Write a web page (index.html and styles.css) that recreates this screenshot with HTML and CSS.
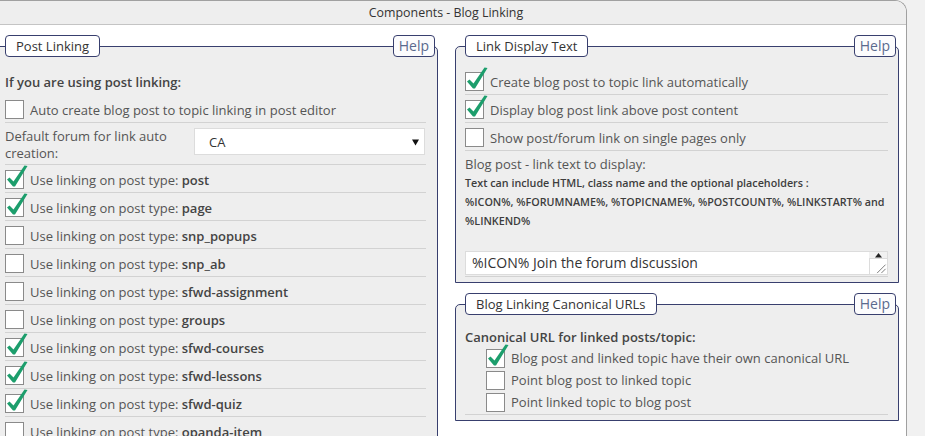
FILE: index.html
```html
<!DOCTYPE html>
<html lang="en">
<head>
<meta charset="utf-8">
<title>Components - Blog Linking</title>
<link rel="stylesheet" href="styles.css">
</head>
<body>
<div class="panel">
  <div class="panel-title">Components - Blog Linking</div>
  <div class="panel-body">
    <section class="fs">
      <div class="fs-head"><span class="legend">Post Linking</span><span class="help">Help</span></div>
      <div class="rows rows-left">
        <div class="row intro">If you are using post linking:</div>
        <div class="row"><span class="cb"></span>Auto create blog post to topic linking in post editor</div>
        <div class="row row-select">
          <span class="sel-label">Default forum for link auto creation:</span>
          <div class="select"><span>CA</span><svg class="sel-arrow" viewBox="0 0 7 7"><polygon points="0,0.5 7,0.5 3.5,6.5"/></svg></div>
        </div>
        <div class="row"><span class="cb"><svg class="tick" viewBox="0 0 19 19"><polygon points="2,9.5 4.5,7.5 8.5,11.5 19.5,-4.5 22.5,-4 10,16.5 8,16.5"/></svg></span>Use linking on post type:&nbsp;<b>post</b></div>
        <div class="row"><span class="cb"><svg class="tick" viewBox="0 0 19 19"><polygon points="2,9.5 4.5,7.5 8.5,11.5 19.5,-4.5 22.5,-4 10,16.5 8,16.5"/></svg></span>Use linking on post type:&nbsp;<b>page</b></div>
        <div class="row"><span class="cb"></span>Use linking on post type:&nbsp;<b>snp_popups</b></div>
        <div class="row"><span class="cb"></span>Use linking on post type:&nbsp;<b>snp_ab</b></div>
        <div class="row"><span class="cb"></span>Use linking on post type:&nbsp;<b>sfwd-assignment</b></div>
        <div class="row"><span class="cb"></span>Use linking on post type:&nbsp;<b>groups</b></div>
        <div class="row"><span class="cb"><svg class="tick" viewBox="0 0 19 19"><polygon points="2,9.5 4.5,7.5 8.5,11.5 19.5,-4.5 22.5,-4 10,16.5 8,16.5"/></svg></span>Use linking on post type:&nbsp;<b>sfwd-courses</b></div>
        <div class="row"><span class="cb"><svg class="tick" viewBox="0 0 19 19"><polygon points="2,9.5 4.5,7.5 8.5,11.5 19.5,-4.5 22.5,-4 10,16.5 8,16.5"/></svg></span>Use linking on post type:&nbsp;<b>sfwd-lessons</b></div>
        <div class="row"><span class="cb"><svg class="tick" viewBox="0 0 19 19"><polygon points="2,9.5 4.5,7.5 8.5,11.5 19.5,-4.5 22.5,-4 10,16.5 8,16.5"/></svg></span>Use linking on post type:&nbsp;<b>sfwd-quiz</b></div>
        <div class="row"><span class="cb"></span>Use linking on post type:&nbsp;<b>opanda-item</b></div>
      </div>
    </section>

    <div class="col-right">
      <section class="fs">
        <div class="fs-head"><span class="legend">Link Display Text</span><span class="help">Help</span></div>
        <div class="rows rows-right">
          <div class="row"><span class="cb"><svg class="tick" viewBox="0 0 19 19"><polygon points="2,9.5 4.5,7.5 8.5,11.5 19.5,-4.5 22.5,-4 10,16.5 8,16.5"/></svg></span>Create blog post to topic link automatically</div>
          <div class="row"><span class="cb"><svg class="tick" viewBox="0 0 19 19"><polygon points="2,9.5 4.5,7.5 8.5,11.5 19.5,-4.5 22.5,-4 10,16.5 8,16.5"/></svg></span>Display blog post link above post content</div>
          <div class="row"><span class="cb"></span>Show post/forum link on single pages only</div>
          <div class="ta-block">
            <div class="ta-label">Blog post - link text to display:</div>
            <div class="note">Text can include HTML, class name and the optional placeholders :<br>%ICON%, %FORUMNAME%, %TOPICNAME%, %POSTCOUNT%, %LINKSTART% and %LINKEND%</div>
            <div class="ta">
              <textarea rows="1">%ICON% Join the forum discussion</textarea>
              <div class="ta-scroll">
                <div class="ta-arrow"><svg viewBox="0 0 7 5"><polygon points="3.5,0 7,4.5 0,4.5"/></svg></div>
                <div class="ta-grip"><svg viewBox="0 0 16 16"><line x1="6" y1="15" x2="15" y2="6"/><line x1="10.5" y1="15" x2="15" y2="10.5"/></svg></div>
              </div>
            </div>
          </div>
        </div>
      </section>

      <section class="fs">
        <div class="fs-head"><span class="legend">Blog Linking Canonical URLs</span><span class="help">Help</span></div>
        <div class="rows rows-right">
          <div class="canon-title">Canonical URL for linked posts/topic:</div>
          <div class="opts">
            <div class="opt"><span class="cb"><svg class="tick" viewBox="0 0 19 19"><polygon points="2,9.5 4.5,7.5 8.5,11.5 19.5,-4.5 22.5,-4 10,16.5 8,16.5"/></svg></span>Blog post and linked topic have their own canonical URL</div>
            <div class="opt"><span class="cb"></span>Point blog post to linked topic</div>
            <div class="opt"><span class="cb"></span>Point linked topic to blog post</div>
          </div>
        </div>
      </section>
    </div>
  </div>
</div>
</body>
</html>
```

FILE: styles.css
```css
* { box-sizing: border-box; }

html, body {
  margin: 0;
  padding: 0;
  height: 436px;
  overflow: hidden;
}

body {
  background: #f1f1f1;
  font-family: "Open Sans", "Liberation Sans", sans-serif;
  font-size: 13px;
  color: #555;
}

.panel {
  width: 922px;
  height: 480px;
  margin-left: -15px;
  background: #fff;
  border: 1px solid #a0a0a0;
  border-bottom: none;
  border-radius: 0 12px 0 0;
}

.panel-title {
  height: 24px;
  background: #eee;
  border-bottom: 1px solid #c4c4c4;
  border-radius: 0 11px 0 0;
  text-align: center;
  font-size: 12.4px;
  line-height: 23px;
  color: #333;
}

.panel-body {
  display: grid;
  grid-template-columns: 443px 444px;
  column-gap: 17px;
  align-items: start;
  padding: 21px 7px 0 9px;
}

.col-right {
  display: flex;
  flex-direction: column;
  gap: 21px;
}

.fs {
  background: #eee;
  border: 1px solid #383f6e;
  border-radius: 5px 5px 0 0;
  padding: 0 0 5px 0;
}

.fs-head {
  display: flex;
  justify-content: space-between;
  align-items: flex-start;
  margin: -12px 2px 10px 9px;
}

.legend, .help {
  background: #fff;
  border: 1px solid #383f6e;
  border-radius: 4px;
  line-height: 20px;
  height: 22px;
  white-space: nowrap;
}

.legend {
  padding: 0 10px;
  color: #333;
}

.help {
  padding: 0 5px;
  font-size: 14px;
  color: #5a6a8e;
  background: #fcfcfd;
}

.rows-left { margin: 0 11px 0 9px; }
.rows-right { margin: 0 10px 0 9px; }

.row {
  display: flex;
  align-items: center;
  height: 28px;
  padding-top: 2px;
  border-bottom: 1px solid #d2d2d2;
  white-space: nowrap;
}

.row b, .opt b {
  font-weight: 600;
  color: #444;
}

.intro {
  border-bottom-color: transparent;
  font-weight: 600;
  color: #444;
}

.row-select {
  height: 42px;
  align-items: flex-start;
  padding-top: 5px;
  white-space: normal;
}

.sel-label {
  width: 189px;
  flex: none;
  line-height: 17px;
}

.select {
  width: 231px;
  height: 27px;
  flex: none;
  background: #fff;
  border: 1px solid #dcdcdc;
  display: flex;
  align-items: center;
  justify-content: space-between;
  padding: 0 5px 0 14px;
  color: #333;
}

.sel-arrow {
  width: 7px;
  height: 7px;
  fill: #111;
  margin-top: 1px;
}

.cb {
  position: relative;
  flex: none;
  width: 19px;
  height: 19px;
  margin-right: 6px;
  background: #fff;
  border: 1px solid #8a8a8a;
}

.tick {
  position: absolute;
  left: -1px;
  top: -1px;
  width: 19px;
  height: 19px;
  overflow: visible;
  fill: #1c9e6c;
}

.ta-block {
  border-bottom: 1px solid #d2d2d2;
  padding: 4px 0 1px 0;
}

.ta-label {
  line-height: 19px;
}

.note {
  font-size: 10.75px;
  font-weight: 600;
  line-height: 19px;
  color: #3d3d3d;
}

.ta {
  display: flex;
  height: 24px;
  margin-top: 20px;
  background: #fff;
  border: 1px solid #dcdcdc;
}

.ta textarea {
  flex: 1;
  min-width: 0;
  height: 22px;
  border: none;
  outline: none;
  resize: none;
  overflow: hidden;
  background: transparent;
  font-family: "Open Sans", "Liberation Sans", sans-serif;
  font-size: 14px;
  line-height: 21px;
  color: #333;
  padding: 0 6px;
  margin: 0;
}

.ta-scroll {
  width: 18px;
  flex: none;
  display: flex;
  flex-direction: column;
  background: #f1f1f1;
}

.ta-arrow {
  height: 6px;
  display: flex;
  justify-content: center;
  align-items: flex-end;
}

.ta-arrow svg {
  width: 7px;
  height: 5px;
  fill: #222;
}

.ta-grip {
  flex: 1;
  background: #fff;
  border-top: 1px solid #dcdcdc;
  border-left: 1px solid #dcdcdc;
  display: flex;
  justify-content: flex-end;
  align-items: flex-end;
}

.ta-grip svg {
  width: 16px;
  height: 15px;
  stroke: #777;
  stroke-width: 1;
}

.canon-title {
  padding-top: 2px;
  line-height: 20px;
  font-weight: 600;
  color: #444;
}

.opts {
  border-bottom: 1px solid #d2d2d2;
  padding-bottom: 1px;
}

.opt {
  display: flex;
  align-items: center;
  height: 22px;
  padding-left: 21px;
  white-space: nowrap;
}
```
